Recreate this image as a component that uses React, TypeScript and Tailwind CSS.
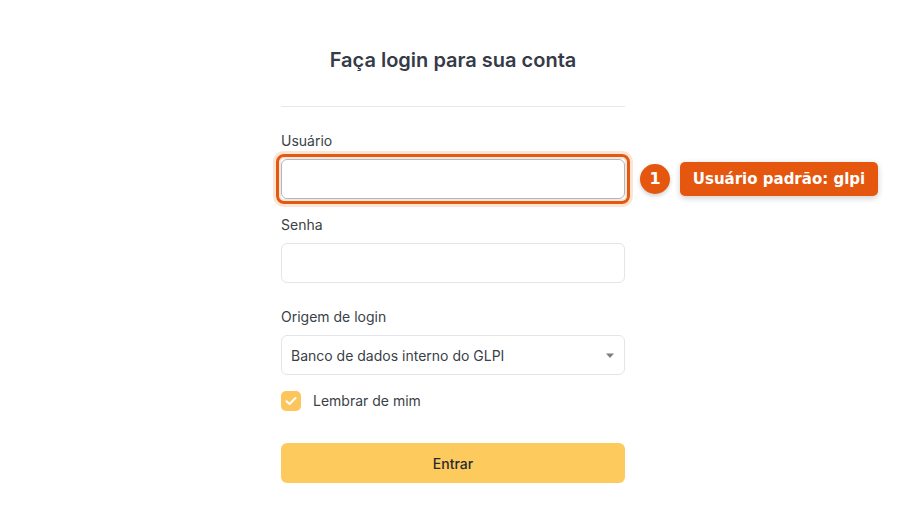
import React from "react";

export default function App() {
  return (
    <div className="min-h-[521px] w-full bg-white" style={{ fontFamily: "Inter, 'Noto Sans', sans-serif" }}>
      <div className="mx-auto w-[344px] pt-[47px]">
        <h1 className="text-center text-[20px] font-semibold leading-[26px] text-[#353b47]">Faça login para sua conta</h1>
        <div className="mt-[33px] h-px w-full bg-[#e6e8eb]" />

        <div className="mt-[24px]">
          <label className="mb-[8px] block text-[14px] leading-[20px] text-[#3a3f48]">Usuário</label>
          <div className="relative">
            <input
              className="block h-[40px] w-full rounded-[6px] border border-[#a9b9c9] bg-white px-3 text-[14px] outline-none"
              type="text"
            />
            <div className="pointer-events-none absolute -left-[5px] -right-[5px] -top-[5px] -bottom-[5px] rounded-[8px] border-[3px] border-[#e05a12] shadow-[0_0_0_3px_#fde4d4,inset_0_0_0_2px_#fde4d4]" />
            <div className="absolute left-[359px] top-[3px] flex items-center gap-[10px]" style={{ fontFamily: "'DejaVu Sans', sans-serif" }}>
              <div className="flex h-[30px] w-[30px] items-center justify-center rounded-full bg-[#e5570e] text-[16px] font-bold text-white shadow-[0_2px_4px_rgba(0,0,0,0.2)]">1</div>
              <div className="flex h-[34px] w-[198px] items-center justify-center rounded-[5px] bg-[#e5570e] text-[15px] font-bold text-white shadow-[0_2px_6px_rgba(0,0,0,0.2)]">
                Usuário padrão: glpi
              </div>
            </div>
          </div>
        </div>

        <div className="mt-[16px]">
          <label className="mb-[8px] block text-[14px] leading-[20px] text-[#3a3f48]">Senha</label>
          <input
            className="block h-[40px] w-full rounded-[6px] border border-[#e2e5e9] bg-white px-3 text-[14px] outline-none"
            type="password"
          />
        </div>

        <div className="mt-[24px]">
          <label className="mb-[8px] block text-[14px] leading-[20px] text-[#3a3f48]">Origem de login</label>
          <div className="flex h-[40px] w-full items-center justify-between rounded-[6px] border border-[#e2e5e9] bg-white pl-[9px] pr-[9px]">
            <span className="text-[14px] text-[#3a3f48]">Banco de dados interno do GLPI</span>
            <svg width="10" height="6" viewBox="0 0 10 6" className="mt-[2px]">
              <path d="M1 0.5 L9 0.5 L5 5 Z" fill="#7a7f87" />
            </svg>
          </div>
        </div>

        <div className="mt-[16px] flex items-center gap-[12px]">
          <div className="flex h-[20px] w-[20px] items-center justify-center rounded-[5px] bg-[#fcc65c]">
            <svg width="12" height="10" viewBox="0 0 12 10">
              <path d="M1.5 5.2 L4.5 8 L10.5 2" fill="none" stroke="white" strokeWidth="2" strokeLinecap="round" strokeLinejoin="round" />
            </svg>
          </div>
          <span className="text-[14px] leading-[20px] text-[#3a3f48]">Lembrar de mim</span>
        </div>

        <button className="mt-[32px] flex h-[40px] w-full items-center justify-center rounded-[6px] bg-[#fdca5e] text-[14px] font-medium text-[#2a2a2a]">
          Entrar
        </button>
      </div>
    </div>
  );
}
